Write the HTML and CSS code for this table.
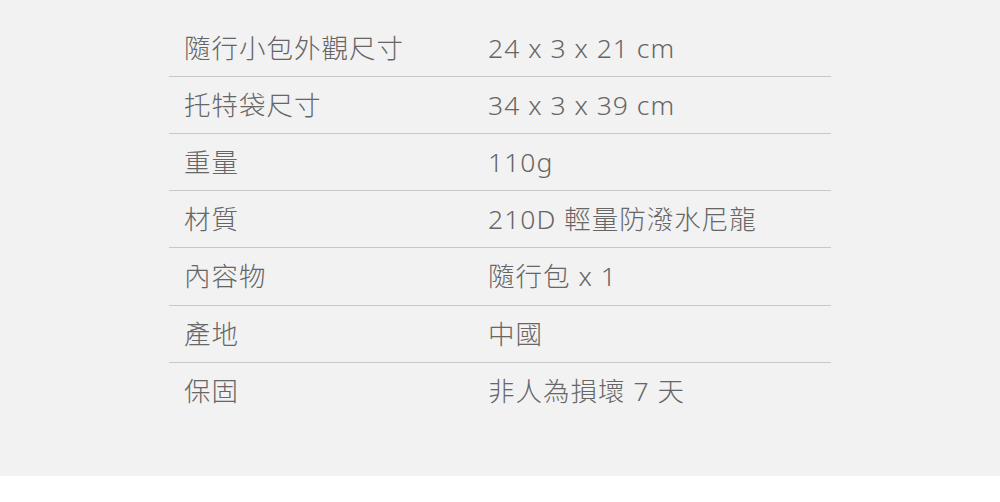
FILE: index.html
```html
<!DOCTYPE html>
<html lang="zh-Hant">
<head>
<meta charset="utf-8">
<link rel="stylesheet" href="styles.css">
</head>
<body>
<div class="page">
  <div class="spec">
    <div class="row"><div class="k">隨行小包外觀尺寸</div><div class="v">24 x 3 x 21 cm</div></div>
    <div class="row"><div class="k">托特袋尺寸</div><div class="v">34 x 3 x 39 cm</div></div>
    <div class="row"><div class="k">重量</div><div class="v">110g</div></div>
    <div class="row"><div class="k">材質</div><div class="v">210D 輕量防潑水尼龍</div></div>
    <div class="row"><div class="k">內容物</div><div class="v">隨行包 x 1</div></div>
    <div class="row"><div class="k">產地</div><div class="v">中國</div></div>
    <div class="row last"><div class="k">保固</div><div class="v">非人為損壞 7 天</div></div>
  </div>
</div>
</body>
</html>
```

FILE: styles.css
```css
html, body {
  margin: 0;
  padding: 0;
  background: #ffffff;
}
.page {
  background: #f2f2f2;
  height: 476px;
  padding-top: 19.5px;
  box-sizing: border-box;
}
.spec {
  width: 662px;
  margin: 0 auto;
  font-family: "Noto Sans", "Noto Sans CJK TC Light", "Noto Sans CJK TC DemiLight", "Noto Sans CJK TC", sans-serif;
  font-size: 26.5px;
  font-weight: 300;
  letter-spacing: 1px;
  color: #666666;
}
.row {
  display: grid;
  grid-template-columns: 304px 1fr;
  border-bottom: 1px solid #c8c8c8;
  line-height: 36.2px;
  padding: 10px 0;
}
.row.last {
  border-bottom: none;
}
.k, .v {
  padding-left: 15px;
  white-space: nowrap;
}
```
